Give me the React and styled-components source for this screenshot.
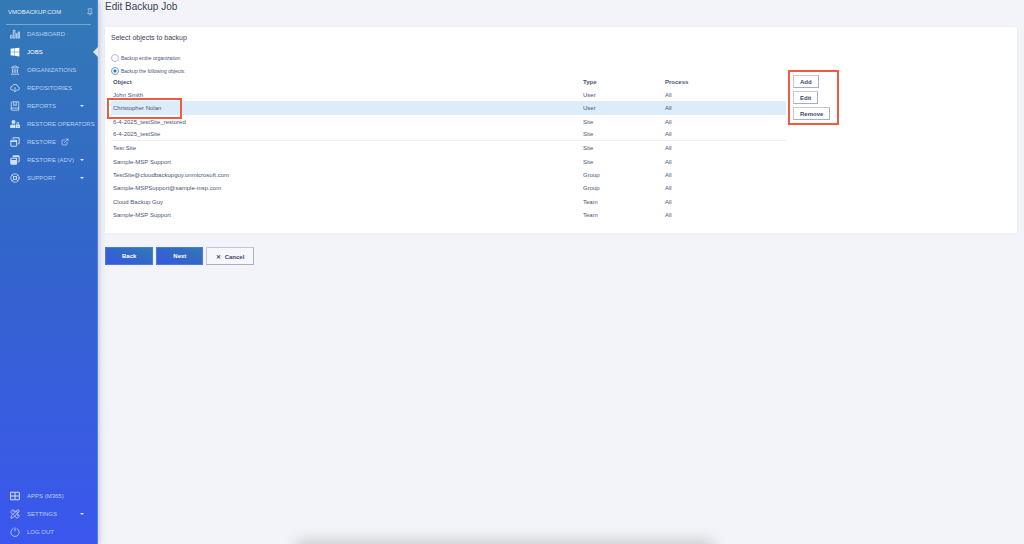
import styled, { createGlobalStyle } from "styled-components";
import { useState } from "react";
import { ExternalLink, Landmark, LifeBuoy, PencilRuler, Pin } from "lucide-react";
import { FaUserLock, FaWindows } from "react-icons/fa";

const GlobalStyle = createGlobalStyle`
  * {
    box-sizing: border-box;
  }
  body {
    margin: 0;
    background: #f3f4f9;
    color: #4a5578;
    font-family: "Liberation Sans", Arial, sans-serif;
    font-size: 6px;
  }
`;

const Page = styled.div`
  display: flex;
  min-height: 100vh;
`;

const Sidebar = styled.aside`
  position: relative;
  display: flex;
  flex-direction: column;
  flex: 0 0 98px;
  padding-bottom: 3px;
  border-right: 1px solid #4c86dc;
  background: linear-gradient(#337ab5, #3267c8 40%, #3b56ee);
  box-shadow: 1px 0 6px rgba(60, 65, 90, 0.3);
`;

const Brand = styled.div`
  display: flex;
  align-items: center;
  justify-content: space-between;
  height: 25px;
  margin: 0 6px;
  padding-left: 2px;
  border-bottom: 1px solid #76a6d2;
  color: #e2eefa;
`;

const PinButton = styled.button`
  display: flex;
  margin-right: -3px;
  padding: 0;
  border: 0;
  background: none;
  color: #c3dbf0;
`;

const Menu = styled.nav`
  display: flex;
  flex-direction: column;
  margin-top: ${({ $bottom }) => ($bottom ? "auto" : "0")};
`;

const MenuLink = styled.a`
  position: relative;
  display: flex;
  align-items: center;
  height: 18px;
  padding-left: 10px;
  color: ${({ $active }) => ($active ? "#ffffff" : "#b8d0f1")};
  white-space: nowrap;
  text-decoration: none;

  > svg {
    flex: none;
    width: 10px;
    height: 10px;
    margin-right: 7px;
    color: ${({ $active }) => ($active ? "#ffffff" : "#cfe0f7")};
  }

  > svg + span + svg {
    width: 8px;
    height: 8px;
    margin: 0 0 0 5px;
  }
`;

const Notch = styled.i`
  position: absolute;
  right: -1px;
  top: 4px;
  border: 5px solid transparent;
  border-left: 0;
  border-right-color: #e3e5ee;
`;

const Caret = styled.i`
  margin: 0 13px 0 auto;
  border: 2px solid transparent;
  border-top-color: #e2ecfb;
  border-bottom: 0;
`;

const Main = styled.main`
  flex: 1;
  min-width: 0;
  padding: 0 7px;
`;

const Title = styled.h1`
  height: 27px;
  margin: 0;
  color: #3c4258;
  font-size: 10px;
  font-weight: 400;
  line-height: 13px;
`;

const Card = styled.section`
  padding: 6px 6px 12px;
  background: #ffffff;
  box-shadow: 0 0 2px rgba(60, 70, 110, 0.08);
`;

const Heading = styled.h2`
  margin: 0 0 11px;
  color: #3c4258;
  font-size: 7px;
  font-weight: 400;
  line-height: 10px;
`;

const Choices = styled.div`
  display: grid;
  justify-items: start;
  gap: 5px;
`;

const Choice = styled.label`
  display: flex;
  align-items: center;
  gap: 2px;
  height: 8px;
  font-size: 5px;
`;

const Radio = styled.input`
  appearance: none;
  width: 8px;
  height: 8px;
  margin: 0;
  border: 1px solid #b4bacd;
  border-radius: 50%;
  background: #ffffff;

  &:checked {
    border-color: #6ea3d2;
    background: radial-gradient(#2f78bd 0 1px, #ffffff 2px);
  }
`;

const Columns = styled.div`
  display: flex;
  align-items: flex-start;
`;

const Table = styled.table`
  flex: 0 0 75%;
  width: 75%;
  border-spacing: 0;
  table-layout: fixed;

  th,
  td {
    height: 13px;
    padding: 0 2px;
    line-height: 8px;
    text-align: left;
  }
  tbody tr:nth-child(3n + 2) td {
    height: 14px;
  }
  th:nth-child(2) {
    width: 82px;
  }
  th:nth-child(3) {
    width: 123px;
  }
`;

const Row = styled.tr`
  background: ${({ $selected }) => ($selected ? "#dcecfb" : "none")};

  td {
    border-bottom: ${({ $line }) => ($line ? "1px solid #eceef3" : "0")};
  }
`;

const Name = styled.span`
  position: relative;
`;

const Marker = styled.span`
  position: absolute;
  top: -7px;
  left: -6px;
  width: 75px;
  height: 21px;
  border: 2px solid #ef5a43;
`;

const Actions = styled.div`
  display: flex;
  flex-direction: column;
  align-items: flex-start;
  gap: 3px;
  width: 51px;
  margin: -5px 0 0 2px;
  padding: 3px;
  border: 2px solid #ef5a43;
`;

const Button = styled.button`
  height: ${({ $large }) => ($large ? "18px" : "13px")};
  padding: ${({ $large }) => ($large ? "0 9px" : "0 6px")};
  border: 1px solid #c3c7d7;
  border-right-color: #a9aec6;
  border-bottom-color: #a9aec6;
  background: ${({ $large }) => ($large ? "#f6f7fb" : "#ffffff")};
  color: #3d4870;
  font: bold 6px "Liberation Sans", Arial, sans-serif;
`;

const Footer = styled.div`
  display: flex;
  gap: 3px;
  margin-top: 14px;
`;

const PrimaryButton = styled(Button)`
  padding: 0 16px;
  border: 1px solid #4a7ce0;
  background: linear-gradient(20deg, #3758e4, #3267c8 50%, #337ab2);
  color: #ffffff;
`;

const DockShadow = styled.div`
  position: fixed;
  left: 50%;
  bottom: -10px;
  width: 410px;
  height: 10px;
  margin-left: -212px;
  box-shadow: 0 0 14px 3px rgba(70, 70, 75, 0.26);
`;

const BarsIcon = () => (
  <svg viewBox="0 0 24 24" fill="none" stroke="currentColor" strokeWidth="2">
    <path d="M1 15h4v7H1zM8 3h4v19H8zM15 11h2v11h-2zM20 7h3v15h-3z" />
  </svg>
);

const CloudIcon = () => (
  <svg viewBox="0 0 24 24" fill="none" stroke="currentColor" strokeWidth="2">
    <path d="M8 17H6a4.500 4.500 0 0 1-.5-9A7 7 0 0 1 19 8.500 4.300 4.300 0 0 1 18 17h-2" />
    <path d="M12 10v11M8.500 17.500 12 21l3.500-3.500" />
  </svg>
);

const BookIcon = () => (
  <svg viewBox="0 0 24 24" fill="none" stroke="currentColor" strokeWidth="2">
    <path d="M3 20V3a2 2 0 0 1 2-1h16v20H5a2 2 0 0 1 0-5h16" />
    <path d="M9 2v9l3-2 3 2V2" />
  </svg>
);

const WindowsIcon = () => (
  <svg viewBox="0 0 24 24" fill="none" stroke="currentColor" strokeWidth="2.500">
    <rect x="2" y="8" width="14" height="14" rx="2" />
    <path d="M2 11h14M7 4a2 2 0 0 1 2-2h11a2 2 0 0 1 2 2v10a3 3 0 0 1-3 3" />
  </svg>
);

const WindowsFilledIcon = () => (
  <svg viewBox="0 0 24 24" fill="none" stroke="currentColor" strokeWidth="2.500">
    <rect x="2" y="8" width="14" height="14" rx="2" />
    <path d="M3 13h12v8H3z" fill="currentColor" />
    <path d="M7 5a3 3 0 0 1 2-3h11a2 2 0 0 1 2 2v10a3 3 0 0 1-3 3M8 4h13" />
  </svg>
);

const GridIcon = () => (
  <svg viewBox="0 0 24 24" fill="none" stroke="currentColor" strokeWidth="2.500">
    <rect x="1.500" y="3" width="21" height="18" rx="1" />
    <path d="M12 3v18M2 12h20" />
  </svg>
);

const PowerIcon = () => (
  <svg viewBox="0 0 24 24" fill="none" stroke="currentColor" strokeWidth="1.800">
    <path d="M8 3.500a10 10 0 1 0 8 0M12 1v9" />
  </svg>
);

const menu = [
  { label: "DASHBOARD", icon: BarsIcon },
  { label: "JOBS", icon: FaWindows, active: true },
  { label: "ORGANIZATIONS", icon: Landmark },
  { label: "REPOSITORIES", icon: CloudIcon },
  { label: "REPORTS", icon: BookIcon, caret: true },
  { label: "RESTORE OPERATORS", icon: FaUserLock },
  { label: "RESTORE", icon: WindowsIcon, external: true },
  { label: "RESTORE (ADV)", icon: WindowsFilledIcon, caret: true },
  { label: "SUPPORT", icon: LifeBuoy, caret: true },
];

const bottomMenu = [
  { label: "APPS (M365)", icon: GridIcon },
  { label: "SETTINGS", icon: PencilRuler, caret: true },
  { label: "LOG OUT", icon: PowerIcon },
];

const objects = [
  ["John Smith", "User"],
  ["Christopher Nolan", "User"],
  ["6-4-2025_testSite_restored", "Site"],
  ["6-4-2025_testSite", "Site"],
  ["Test Site", "Site"],
  ["Sample-MSP Support", "Site"],
  ["TestSite@cloudbackupguy.onmicrosoft.com", "Group"],
  ["Sample-MSPSupport@sample-msp.com", "Group"],
  ["Cloud Backup Guy", "Team"],
  ["Sample-MSP Support", "Team"],
];

const MenuItem = ({ label, icon: Icon, active, caret, external }) => (
  <MenuLink href="#" $active={active}>
    <Icon />
    <span>{label}</span>
    {external ? <ExternalLink /> : null}
    {caret ? <Caret /> : null}
    {active ? <Notch /> : null}
  </MenuLink>
);

const App = () => {
  const [scope, setScope] = useState("objects");

  return (
    <Page>
      <GlobalStyle />
      <Sidebar>
        <Brand>
          VMOBACKUP.COM
          <PinButton aria-label="Pin menu">
            <Pin size={8} />
          </PinButton>
        </Brand>
        <Menu>
          {menu.map((item) => (
            <MenuItem key={item.label} {...item} />
          ))}
        </Menu>
        <Menu $bottom>
          {bottomMenu.map((item) => (
            <MenuItem key={item.label} {...item} />
          ))}
        </Menu>
      </Sidebar>
      <Main>
        <Title>Edit Backup Job</Title>
        <Card>
          <Heading>Select objects to backup</Heading>
          <Choices>
            <Choice>
              <Radio
                type="radio"
                name="scope"
                checked={scope === "all"}
                onChange={() => setScope("all")}
              />
              Backup entire organization
            </Choice>
            <Choice>
              <Radio
                type="radio"
                name="scope"
                checked={scope === "objects"}
                onChange={() => setScope("objects")}
              />
              Backup the following objects:
            </Choice>
          </Choices>
          <Columns>
            <Table>
              <thead>
                <tr>
                  <th>Object</th>
                  <th>Type</th>
                  <th>Process</th>
                </tr>
              </thead>
              <tbody>
                {objects.map(([name, type], i) => (
                  <Row key={i} $selected={i === 1} $line={i === 3}>
                    <td>
                      <Name>
                        {name}
                        {i === 1 ? <Marker /> : null}
                      </Name>
                    </td>
                    <td>{type}</td>
                    <td>All</td>
                  </Row>
                ))}
              </tbody>
            </Table>
            <Actions>
              <Button>Add</Button>
              <Button>Edit</Button>
              <Button>Remove</Button>
            </Actions>
          </Columns>
        </Card>
        <Footer>
          <PrimaryButton $large>Back</PrimaryButton>
          <PrimaryButton $large>Next</PrimaryButton>
          <Button $large>✕&nbsp; Cancel</Button>
        </Footer>
      </Main>
      <DockShadow />
    </Page>
  );
};

export default App;
